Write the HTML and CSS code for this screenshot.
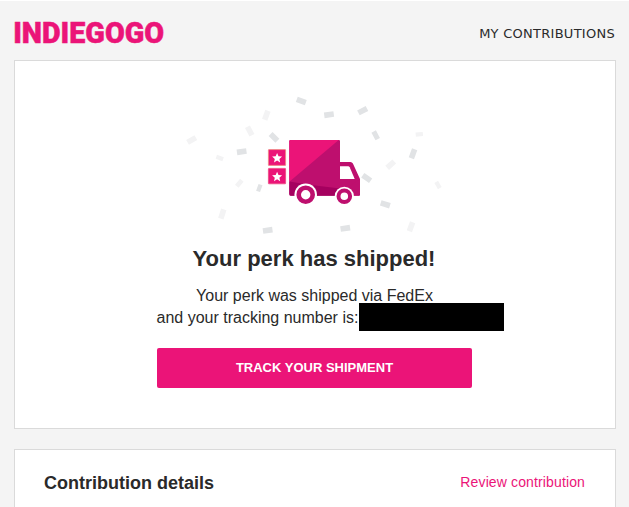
FILE: index.html
```html
<!DOCTYPE html>
<html lang="en">
<head>
<meta charset="utf-8">
<title>Your perk has shipped!</title>
<link rel="stylesheet" href="styles.css">
</head>
<body>
<header class="header">
  <svg class="logo" width="156" height="40" viewBox="13 11 156 40" role="img" aria-label="Indiegogo">
    <text class="logo-text" x="13.2" y="43.3" textLength="151" lengthAdjust="spacingAndGlyphs">INDIEGOGO</text>
  </svg>
  <a class="nav-link">MY CONTRIBUTIONS</a>
</header>
<main>
  <section class="card shipped">
    <svg class="truck" width="270" height="150" viewBox="180 90 270 150">
      <defs>
        <rect id="c" x="-4.8" y="-2.8" width="9.6" height="5.6"/>
        <rect id="s" x="-3.6" y="-2.1" width="7.2" height="4.2"/>
        <path id="star" d="M0-5 1.4-1.7 5-1.4 2.3 1 3.1 4.5 0 2.6-3.1 4.5-2.3 1-5-1.4-1.4-1.7Z"/>
      </defs>
      <g fill="#e1e3e5">
        <use href="#c" transform="translate(301.3 101) rotate(20)"/>
        <use href="#c" transform="translate(274 137.3) rotate(45)"/>
        <use href="#c" transform="translate(241.7 151.7) rotate(-8)"/>
        <use href="#s" transform="translate(259.3 188) rotate(-70)"/>
        <use href="#c" transform="translate(267.7 230.3) rotate(-8)"/>
        <use href="#c" transform="translate(329 114.7) rotate(-8)"/>
        <use href="#c" transform="translate(362.7 110.7) rotate(-27)"/>
        <use href="#c" transform="translate(375.7 135.3) rotate(62) scale(.9)"/>
        <use href="#c" transform="translate(413 153.7) rotate(-70)"/>
        <use href="#c" transform="translate(366.7 178) rotate(35)"/>
        <use href="#c" transform="translate(385.3 204.3) rotate(17)"/>
        <use href="#c" transform="translate(345.3 228.3) rotate(-8)"/>
      </g>
      <g fill="#f3f3f4">
        <use href="#c" transform="translate(266.3 115.3) rotate(-70)"/>
        <use href="#c" transform="translate(249.7 131) rotate(62)"/>
        <use href="#c" transform="translate(191.7 140) rotate(-30)"/>
        <use href="#s" transform="translate(219.7 158) rotate(20)"/>
        <use href="#s" transform="translate(239.3 183.3) rotate(-50) scale(1.1)"/>
        <use href="#c" transform="translate(222.3 214) rotate(-72)"/>
        <use href="#s" transform="translate(419.3 134.3) rotate(-5)"/>
        <use href="#c" transform="translate(390.7 164.7) rotate(-42)"/>
        <use href="#s" transform="translate(438 185) rotate(60)"/>
        <use href="#c" transform="translate(411 226.7) rotate(-70)"/>
      </g>
      <rect x="268.4" y="149.6" width="17.2" height="15.8" rx=".5" fill="#eb1478" stroke="#f08a80" stroke-width=".8"/>
      <rect x="268.4" y="168.4" width="17.2" height="15.4" rx=".5" fill="#eb1478" stroke="#ee4a80" stroke-width=".8"/>
      <use href="#star" x="277.1" y="158" fill="#fff"/>
      <use href="#star" x="277.1" y="176.7" fill="#fff"/>
      <path d="M290.5 140H339a1 1 0 0 1 1 1V162h10.5q1.6 0 2.4 1.6L360 179V194q0 2-2 2H291.3q-2 0-2-2V141.2q0-1.2 1.2-1.2Z" fill="#be0f6e"/>
      <path d="M290.5 140H338.7L289.3 181.8V141.2q0-1.2 1.2-1.2Z" fill="#eb1478"/>
      <path d="M289.3 181.6Q320 187 360 190.5V194q0 2-2 2H291.3q-2 0-2-2Z" fill="#a5005f"/>
      <path d="M345 189 360 179V194q0 2-2 2H345Z" fill="#be0f6e"/>
      <path d="M340 166.3h8.2q1 0 1.5 1l5 11.7H340Z" fill="#fff"/>
      <circle cx="305.7" cy="194.7" r="11.3" fill="#fff"/>
      <circle cx="344.3" cy="196.3" r="9.6" fill="#fff"/>
      <rect x="286" y="195.9" width="78" height="12" fill="#fff"/>
      <circle cx="305.7" cy="194.7" r="7" fill="#fff" stroke="#be0f6e" stroke-width="4.6"/>
      <circle cx="344.3" cy="196.3" r="5.8" fill="#fff" stroke="#be0f6e" stroke-width="4"/>
    </svg>
    <h1 class="title">Your perk has shipped!</h1>
    <p class="message">Your perk was shipped via FedEx<br><span class="tracking">and your tracking number is:<span class="redacted"></span></span></p>
    <a class="button">TRACK YOUR SHIPMENT</a>
  </section>
  <section class="card details">
    <h2 class="details-title">Contribution details</h2>
    <a class="review">Review contribution</a>
  </section>
</main>
</body>
</html>
```

FILE: styles.css
```css
* { box-sizing: border-box; }
html { background: #f4f4f4; }
body {
  margin: 0;
  padding: 0 13px 0 14px;
  border-top: 1px solid #fff;
  background: #f4f4f4;
  color: #2a2a2a;
  font-family: "Liberation Sans", Arial, sans-serif;
}
.header {
  display: flex;
  justify-content: space-between;
  height: 59px;
}
.logo { display: block; margin: 10px 0 0 -1px; }
.logo-text {
  font: 900 29.5px Roboto, sans-serif;
  fill: #eb1478;
  stroke: #eb1478;
  stroke-width: .5px;
}
.nav-link {
  padding: 25px 1px 0 0;
  font: 13px/16px "DejaVu Sans", Verdana, sans-serif;
  letter-spacing: .27px;
  white-space: nowrap;
}
.card {
  border: 1px solid #dadada;
  background: #fff;
}
.shipped {
  display: flex;
  flex-direction: column;
  align-items: center;
  height: 369px;
  padding-top: 29px;
  margin-bottom: 20px;
}
.truck { display: block; flex: none; }
.title {
  margin: 4px 0 0;
  padding-right: 2px;
  font-size: 22px;
  line-height: 30px;
  white-space: nowrap;
}
.message {
  margin: 11px 0 0;
  padding-right: 1px;
  font-size: 16px;
  line-height: 22px;
  text-align: center;
  white-space: nowrap;
}
.tracking {
  display: flex;
  align-items: center;
  width: 347px;
  margin-left: 31px;
}
.redacted {
  flex: none;
  width: 145px;
  height: 28px;
  margin: -4px 0 -2px 1px;
  background: #000;
}
.button {
  width: 315px;
  height: 40px;
  margin: 19px 1px 0 0;
  border-radius: 2px;
  background: #eb1478;
  color: #fff;
  font-size: 13px;
  font-weight: bold;
  line-height: 39px;
  text-align: center;
}
.details {
  display: flex;
  justify-content: space-between;
  height: 58px;
  padding: 22px 30px 0 29px;
  border-bottom: 0;
}
.details-title {
  margin: 0;
  font-size: 18px;
  line-height: 22px;
}
.review {
  color: #eb1478;
  font-size: 14px;
  line-height: 21px;
  letter-spacing: .13px;
}
```
